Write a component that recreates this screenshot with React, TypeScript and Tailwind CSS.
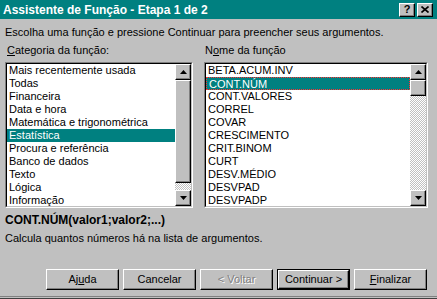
import React from "react";

const categories = [
  "Mais recentemente usada",
  "Todas",
  "Financeira",
  "Data e hora",
  "Matemática e trigonométrica",
  "Estatística",
  "Procura e referência",
  "Banco de dados",
  "Texto",
  "Lógica",
  "Informação",
];

const functions = [
  "BETA.ACUM.INV",
  "CONT.NÚM",
  "CONT.VALORES",
  "CORREL",
  "COVAR",
  "CRESCIMENTO",
  "CRIT.BINOM",
  "CURT",
  "DESV.MÉDIO",
  "DESVPAD",
  "DESVPADP",
];

const raised =
  "border border-t-white border-l-white border-r-black border-b-black bg-[#c0c0c0] shadow-[inset_-1px_-1px_#808080]";

function Arrow({ down }: { down?: boolean }) {
  return (
    <svg width="7" height="4" viewBox="0 0 7 4">
      <path d={down ? "M0 0h7L3.5 4z" : "M0 4h7L3.5 0z"} fill="#000" />
    </svg>
  );
}

function ScrollButton({ down }: { down?: boolean }) {
  return (
    <div className={`flex h-[16px] w-[16px] shrink-0 items-center justify-center ${raised}`}>
      <Arrow down={down} />
    </div>
  );
}

function Scrollbar({ thumb }: { thumb: number }) {
  return (
    <div className="flex w-[16px] shrink-0 flex-col">
      <ScrollButton />
      <div className="flex flex-1 flex-col bg-[repeating-conic-gradient(#c0c0c0_0%_25%,#ffffff_0%_50%)] bg-[length:2px_2px]">
        <div className={`w-[16px] ${raised}`} style={{ height: thumb }} />
      </div>
      <ScrollButton down />
    </div>
  );
}

function ListBox({
  items,
  selected,
  width,
  focus,
  thumb,
}: {
  items: string[];
  selected: number;
  width: string;
  focus?: boolean;
  thumb: number;
}) {
  return (
    <div
      className={`${width} flex h-[146px] border border-t-[#808080] border-l-[#808080] border-r-white border-b-white`}
    >
      <div className="flex flex-1 border border-t-black border-l-black border-r-[#c0c0c0] border-b-[#c0c0c0] bg-white">
        <ul className="flex-1 overflow-hidden">
          {items.map((item, i) => (
            <li
              key={item}
              className={`h-[13px] pl-[2px] leading-[13px] whitespace-nowrap ${
                i === selected ? "bg-[#008080] text-white" : "text-black"
              } ${i === selected && focus ? "border border-dotted border-[#ff3030] pl-[1px] leading-[11px]" : ""}`}
            >
              {item}
            </li>
          ))}
        </ul>
        <Scrollbar thumb={thumb} />
      </div>
    </div>
  );
}

function DialogButton({
  children,
  isDefault,
  disabled,
}: {
  children: React.ReactNode;
  isDefault?: boolean;
  disabled?: boolean;
}) {
  return (
    <div className={`h-[21px] w-[73px] ${isDefault ? "border border-black" : ""}`}>
      <div
        className={`flex h-full w-full items-center justify-center ${raised} ${
          disabled ? "text-[#808080] [text-shadow:1px_1px_#ffffff]" : "text-black"
        }`}
      >
        {children}
      </div>
    </div>
  );
}

export default function App() {
  return (
    <div className="flex h-[299px] w-[437px] flex-col bg-[#c0c0c0] font-['Liberation_Sans',Arial,sans-serif] text-[11px] text-black">
      <header className="flex h-[19px] items-center justify-between bg-[#008080] pl-[3px] pr-[4px]">
        <span className="text-[12px] font-bold text-white">Assistente de Função - Etapa 1 de 2</span>
        <div className="flex gap-[2px]">
          <div className={`flex h-[14px] w-[16px] items-center justify-center text-[11px] font-bold leading-none ${raised}`}>
            ?
          </div>
          <div className={`flex h-[14px] w-[16px] items-center justify-center ${raised}`}>
            <svg width="8" height="7" viewBox="0 0 8 7">
              <path d="M0.5 0.5L7.5 6.5M7.5 0.5L0.5 6.5" stroke="#000" strokeWidth="1.6" />
            </svg>
          </div>
        </div>
      </header>

      <p className="mt-[7px] pl-[5px] leading-[13px]">
        Escolha uma função e pressione Continuar para preencher seus argumentos.
      </p>

      <div className="mt-[5px] flex gap-[11px] pl-[5px]">
        <div className="flex flex-col">
          <label className="pl-[2px] leading-[13px]">
            <span className="underline">C</span>ategoria da função:
          </label>
          <div className="mt-[5px]">
            <ListBox items={categories} selected={5} width="w-[188px]" thumb={103} />
          </div>
        </div>
        <div className="flex flex-col">
          <label className="pl-[1px] leading-[13px]">
            N<span className="underline">o</span>me da função
          </label>
          <div className="mt-[5px]">
            <ListBox items={functions} selected={1} width="w-[224px]" focus thumb={16} />
          </div>
        </div>
      </div>

      <p className="mt-[5px] pl-[5px] text-[12px] font-bold leading-[14px]">CONT.NÚM(valor1;valor2;...)</p>
      <p className="mt-[5px] pl-[5px] leading-[13px]">Calcula quantos números há na lista de argumentos.</p>

      <div className="mt-[24px] flex justify-end gap-[4px] pr-[10px]">
        <DialogButton>
          <span>
            Aj<span className="underline">u</span>da
          </span>
        </DialogButton>
        <DialogButton>Cancelar</DialogButton>
        <DialogButton disabled>&lt; Voltar</DialogButton>
        <DialogButton isDefault>Continuar &gt;</DialogButton>
        <DialogButton>
          <span>
            <span className="underline">F</span>inalizar
          </span>
        </DialogButton>
      </div>
      <div className="mt-auto h-[3px] border-b border-b-[#404040] border-t border-t-[#808080]" />
    </div>
  );
}
